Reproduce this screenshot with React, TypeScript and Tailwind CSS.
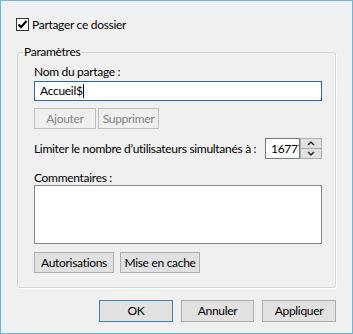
import React from 'react';

const font = { fontFamily: 'Lato, "Segoe UI", sans-serif' };

const Btn: React.FC<{ label: string; w: string; h?: string; disabled?: boolean; primary?: boolean }> = ({ label, w, h = 'h-[22px]', disabled, primary }) => (
  <button
    className={
      disabled
        ? `${w} ${h} border border-[#bfbfbf] bg-[#efefef] text-[#838383] text-[12px] leading-none whitespace-nowrap`
        : primary
        ? `${w} ${h} border border-[#3c7fb1] bg-[#e1e1e1] text-black text-[12px] leading-none whitespace-nowrap`
        : `${w} ${h} border border-[#adadad] bg-[#e1e1e1] text-black text-[12px] leading-none whitespace-nowrap`
    }
  >
    {label}
  </button>
);

const App: React.FC = () => {
  return (
    <div className="w-[353px] h-[334px] bg-[#f0f0f0] border border-[#5fb9e0] border-t-[#7fb4d4] text-[12px] tracking-[-0.3px] text-black flex flex-col" style={font}>
      <label className="flex items-center gap-[3px] ml-[15px] mt-[17px] h-[13px]">
        <span className="w-[13px] h-[13px] border border-[#333] bg-white flex items-center justify-center">
          <svg width="11" height="11" viewBox="0 0 11 11">
            <path d="M1.5 5.5 L4 8.2 L9.5 2" fill="none" stroke="#000" strokeWidth="2.2" />
          </svg>
        </span>
        <span className="leading-[16px] whitespace-nowrap">Partager ce dossier</span>
      </label>

      <fieldset className="min-w-0 mx-[16px] mt-[13px] h-[244px] border border-[#d5d5d5] rounded-[3px] shadow-[1px_1px_0_#ffffff] pl-[5px] pr-0">
        <legend className="px-[1px] leading-[16px]">Paramètres</legend>

        <div className="pl-[11px] pr-[13px]">
          <div className="mt-[4px] leading-[16px]">Nom du partage :</div>
          <div className="mt-[1px] h-[20px] border border-[#2d6ca2] bg-white flex items-center px-[5px]">
            <span className="leading-[16px]">Accueil$</span>
            <span className="w-[1px] h-[14px] bg-black" />
          </div>

          <div className="mt-[7px] flex gap-[2px]">
            <Btn label="Ajouter" w="w-[62px]" h="h-[21px]" disabled />
            <Btn label="Supprimer" w="w-[61px]" h="h-[21px]" disabled />
          </div>

          <div className="mt-[9px] flex items-center justify-between h-[21px]">
            <span className="leading-[16px] whitespace-nowrap">Limiter le nombre d’utilisateurs simultanés à :</span>
            <div className="flex h-[21px]">
              <div className="w-[35px] border border-[#7a7a7a] bg-white overflow-hidden flex items-center pl-[5px]">
                <span className="whitespace-nowrap leading-[16px]">16777216</span>
              </div>
              <div className="w-[22px] flex flex-col border border-[#adadad] bg-[#e1e1e1]">
                <div className="flex-1 flex items-center justify-center border-b border-[#adadad]">
                  <svg width="8" height="5" viewBox="0 0 8 5">
                    <path d="M1 4 L4 1 L7 4" fill="none" stroke="#000" strokeWidth="1.2" />
                  </svg>
                </div>
                <div className="flex-1 flex items-center justify-center">
                  <svg width="8" height="5" viewBox="0 0 8 5">
                    <path d="M1 1 L4 4 L7 1" fill="none" stroke="#000" strokeWidth="1.2" />
                  </svg>
                </div>
              </div>
            </div>
          </div>

          <div className="mt-[12px] leading-[14px]">Commentaires :</div>
          <div className="h-[59px] border border-[#828790] bg-white" />

          <div className="mt-[8px] flex gap-[6px]">
            <Btn label="Autorisations" w="w-[80px]" h="h-[21px]" />
            <Btn label="Mise en cache" w="w-[80px]" h="h-[21px]" />
          </div>
        </div>
      </fieldset>

      <div className="mt-[12px] mr-[16px] flex justify-end gap-[8px]">
        <Btn label="OK" w="w-[74px]" primary />
        <Btn label="Annuler" w="w-[73px]" />
        <Btn label="Appliquer" w="w-[74px]" />
      </div>
    </div>
  );
};

export default App;
